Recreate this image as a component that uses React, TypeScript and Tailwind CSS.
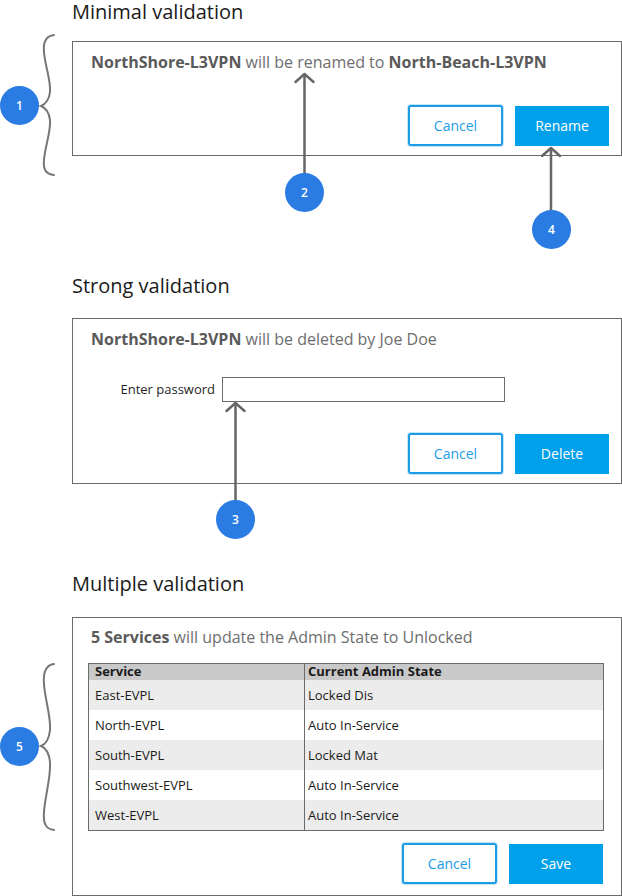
import React from "react";

const rows = [
  { service: "East-EVPL", state: "Locked Dis" },
  { service: "North-EVPL", state: "Auto In-Service" },
  { service: "South-EVPL", state: "Locked Mat" },
  { service: "Southwest-EVPL", state: "Auto In-Service" },
  { service: "West-EVPL", state: "Auto In-Service" },
];

function CancelButton() {
  return (
    <button className="flex h-[41px] w-[95px] items-center justify-center rounded-[3px] border-2 border-[#1d9ce6] bg-white text-[14px] text-[#1d9ce6] shadow-[0_0_0_1px_#c4e5f8]">
      Cancel
    </button>
  );
}

function PrimaryButton({ label }: { label: string }) {
  return (
    <button className="flex h-[40px] w-[94px] items-center justify-center bg-[#00a0ea] text-[14px] text-white">
      {label}
    </button>
  );
}

function Badge({ n, className }: { n: number; className: string }) {
  return (
    <div
      className={`absolute flex h-[39px] w-[39px] items-center justify-center rounded-full bg-[#2a7be2] text-[12px] font-semibold text-white ${className}`}
    >
      {n}
    </div>
  );
}

function Arrow({ x, tip, end }: { x: number; tip: number; end: number }) {
  return (
    <g stroke="#666" strokeWidth={2.5} fill="none" strokeLinecap="round" strokeLinejoin="round">
      <line x1={x} y1={tip + 1} x2={x} y2={end} />
      <path d={`M${x - 9} ${tip + 8} L${x} ${tip} L${x + 9} ${tip + 8}`} />
    </g>
  );
}

export default function App() {
  return (
    <div className="relative h-[896px] w-[622px] overflow-hidden bg-white font-['Open_Sans',sans-serif]">
      <div className="ml-[72px] w-[550px]">
        {/* minimal */}
        <h2 className="text-[20px] leading-[24px] text-[#1a1a1a]">Minimal validation</h2>
        <div className="mt-[17px] border border-[#6b6b6b] pb-[9px] pl-[18px] pr-[12px] pt-[10px]">
          <p className="text-[16px] leading-[20px] text-[#6e6e6e]">
            <span className="font-bold text-[#5a5a5a]">NorthShore-L3VPN</span> will be renamed to{" "}
            <span className="font-bold text-[#5a5a5a]">North-Beach-L3VPN</span>
          </p>
          <div className="mt-[33px] flex items-center justify-end gap-[12px]">
            <CancelButton />
            <PrimaryButton label="Rename" />
          </div>
        </div>

        {/* strong */}
        <h2 className="mt-[118px] text-[20px] leading-[24px] text-[#1a1a1a]">Strong validation</h2>
        <div className="mt-[20px] border border-[#6b6b6b] pb-[9px] pl-[18px] pr-[12px] pt-[10px]">
          <p className="text-[16px] leading-[20px] text-[#6e6e6e]">
            <span className="font-bold text-[#5a5a5a]">NorthShore-L3VPN</span> will be deleted by Joe Doe
          </p>
          <div className="-ml-[18px] mt-[28px] flex items-center gap-[7px]">
            <label className="w-[142px] text-right text-[13px] text-[#1f1f1f]">Enter password</label>
            <input type="password" className="h-[25px] w-[283px] border border-[#6b6b6b] bg-white outline-none" />
          </div>
          <div className="mt-[31px] flex items-center justify-end gap-[12px]">
            <CancelButton />
            <PrimaryButton label="Delete" />
          </div>
        </div>

        {/* multiple */}
        <h2 className="mt-[88px] text-[20px] leading-[24px] text-[#1a1a1a]">Multiple validation</h2>
        <div className="mt-[21px] border border-[#6b6b6b] pb-[11px] pl-[18px] pt-[9px]">
          <p className="text-[16px] leading-[20px] text-[#6e6e6e]">
            <span className="font-bold text-[#5a5a5a]">5 Services</span> will update the Admin State to Unlocked
          </p>
          <div className="-ml-[3px] mr-[17px] mt-[16px] border border-[#6b6b6b] text-[13px] text-[#1a1a1a]">
            <div className="grid h-[16px] grid-cols-[216px_1fr] bg-[#c9c9c9] font-bold leading-[14px]">
              <div className="border-r border-[#6b6b6b] pl-[6px]">Service</div>
              <div className="pl-[3px]">Current Admin State</div>
            </div>
            {rows.map((r, i) => (
              <div
                key={r.service}
                className={`grid h-[30px] grid-cols-[216px_1fr] leading-[30px] ${i % 2 === 0 ? "bg-[#ececec]" : "bg-white"}`}
              >
                <div className="border-r border-[#6b6b6b] pl-[6px]">{r.service}</div>
                <div className="pl-[3px]">{r.state}</div>
              </div>
            ))}
          </div>
          <div className="mr-[18px] mt-[12px] flex items-center justify-end gap-[12px]">
            <CancelButton />
            <PrimaryButton label="Save" />
          </div>
        </div>
      </div>

      {/* annotations */}
      <svg className="pointer-events-none absolute left-0 top-0" width={622} height={896} viewBox="0 0 622 896">
        <g stroke="#777" strokeWidth={2} fill="none" strokeLinecap="round">
          <path d="M54 35 C46 36 43 42 44 52 C45 66 51 80 50 92 C49 100 46 104 41 106 C46 108 49 112 50 120 C51 132 45 146 44 160 C43 170 46 174 54 175" />
          <path d="M54 664 C46 665 43 672 44 684 C45 700 51 716 50 730 C49 740 46 744 41 746 C46 748 49 752 50 762 C51 778 45 796 44 812 C43 824 46 829 54 830" />
        </g>
        <Arrow x={304.5} tip={74} end={174} />
        <Arrow x={551} tip={148} end={211} />
        <Arrow x={235.5} tip={403} end={501} />
      </svg>
      <Badge n={1} className="left-0 top-[86px]" />
      <Badge n={2} className="left-[285px] top-[173px]" />
      <Badge n={4} className="left-[532px] top-[210px]" />
      <Badge n={3} className="left-[216px] top-[500px]" />
      <Badge n={5} className="left-0 top-[727px]" />
    </div>
  );
}
